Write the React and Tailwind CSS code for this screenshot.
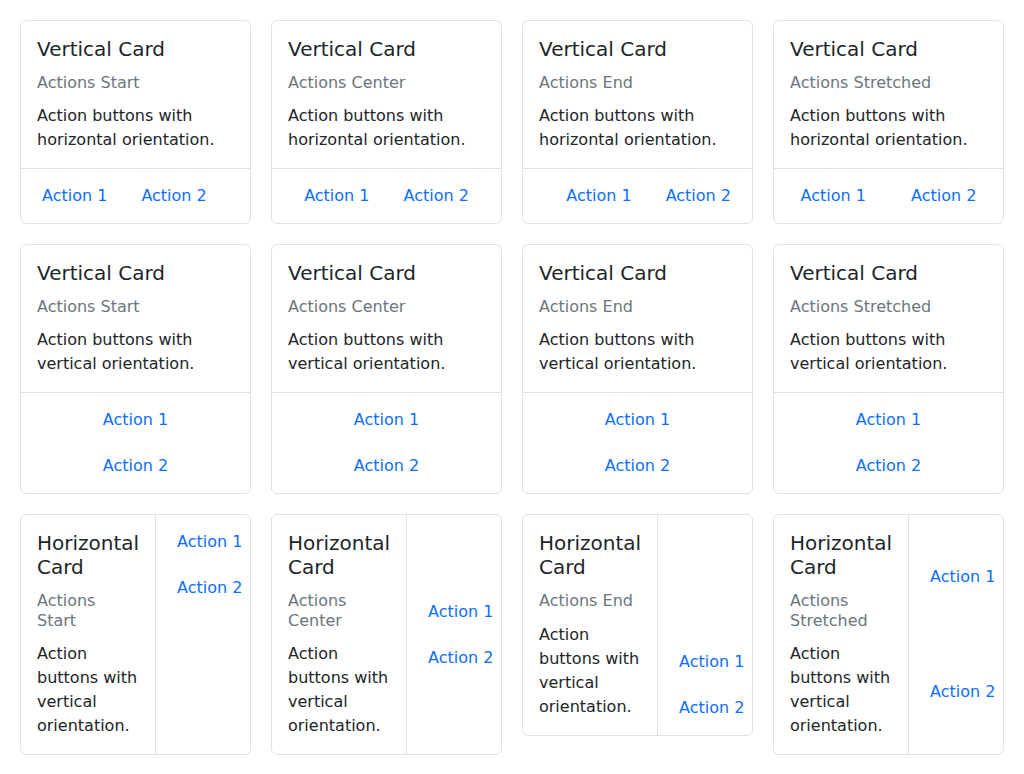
const verticalRow = [
  { sub: 'Actions Start', align: 'start' },
  { sub: 'Actions Center', align: 'center' },
  { sub: 'Actions End', align: 'end' },
  { sub: 'Actions Stretched', align: 'stretch' },
];

const rowJustify = {
  start: 'justify-start',
  center: 'justify-center',
  end: 'justify-end',
  stretch: 'justify-between',
};

const colJustify = {
  start: 'justify-start',
  center: 'justify-center',
  end: 'justify-end',
  stretch: 'justify-between',
};

const Btn = ({ children, className = '' }) => (
  <button className={`px-3 py-1.5 border border-transparent rounded-md text-base leading-6 text-[#0d6efd] whitespace-nowrap ${className}`}>
    {children}
  </button>
);

const Body = ({ title, sub, text, className = '' }) => (
  <div className={`p-4 ${className}`}>
    <h5 className="text-xl leading-6 font-normal mb-3">{title}</h5>
    <h6 className="text-base leading-[1.2] font-normal text-[#6c757d] mb-3">{sub}</h6>
    <p className="text-base leading-6">{text}</p>
  </div>
);

const HorizontalActionsCard = ({ sub, align }) => (
  <div className="bg-white border border-[#dee2e6] rounded-md">
    <Body title="Vertical Card" sub={sub} text="Action buttons with horizontal orientation." />
    <div className={`border-t border-[#dee2e6] p-2 flex gap-2 ${rowJustify[align]}`}>
      <Btn className={align === 'stretch' ? 'flex-1' : ''}>Action 1</Btn>
      <Btn className={align === 'stretch' ? 'flex-1' : ''}>Action 2</Btn>
    </div>
  </div>
);

const VerticalActionsCard = ({ sub }) => (
  <div className="bg-white border border-[#dee2e6] rounded-md">
    <Body title="Vertical Card" sub={sub} text="Action buttons with vertical orientation." />
    <div className="border-t border-[#dee2e6] p-2 flex flex-col gap-2">
      <Btn className="w-full">Action 1</Btn>
      <Btn className="w-full">Action 2</Btn>
    </div>
  </div>
);

const HorizontalCard = ({ sub, align }) => (
  <div className="bg-white border border-[#dee2e6] rounded-md flex">
    <Body
      title="Horizontal Card"
      sub={sub}
      text="Action buttons with vertical orientation."
      className="w-[135px] shrink-0 border-r border-[#dee2e6]"
    />
    <div className={`w-[94px] p-2 flex flex-col gap-2 ${colJustify[align]}`}>
      <Btn className={`w-full text-left overflow-visible ${align === 'stretch' ? 'flex-1' : ''}`}>Action 1</Btn>
      <Btn className={`w-full text-left overflow-visible ${align === 'stretch' ? 'flex-1' : ''}`}>Action 2</Btn>
    </div>
  </div>
);

export default function App() {
  return (
    <div
      className="min-h-screen bg-white p-5 text-[#212529]"
      style={{ fontFamily: '"DejaVu Sans", sans-serif' }}
    >
      <div className="grid grid-cols-4 gap-5 items-start">
        {verticalRow.map((c) => (
          <HorizontalActionsCard key={'h' + c.align} {...c} />
        ))}
        {verticalRow.map((c) => (
          <VerticalActionsCard key={'v' + c.align} {...c} />
        ))}
        {verticalRow.map((c) => (
          <HorizontalCard key={'c' + c.align} {...c} />
        ))}
      </div>
    </div>
  );
}
